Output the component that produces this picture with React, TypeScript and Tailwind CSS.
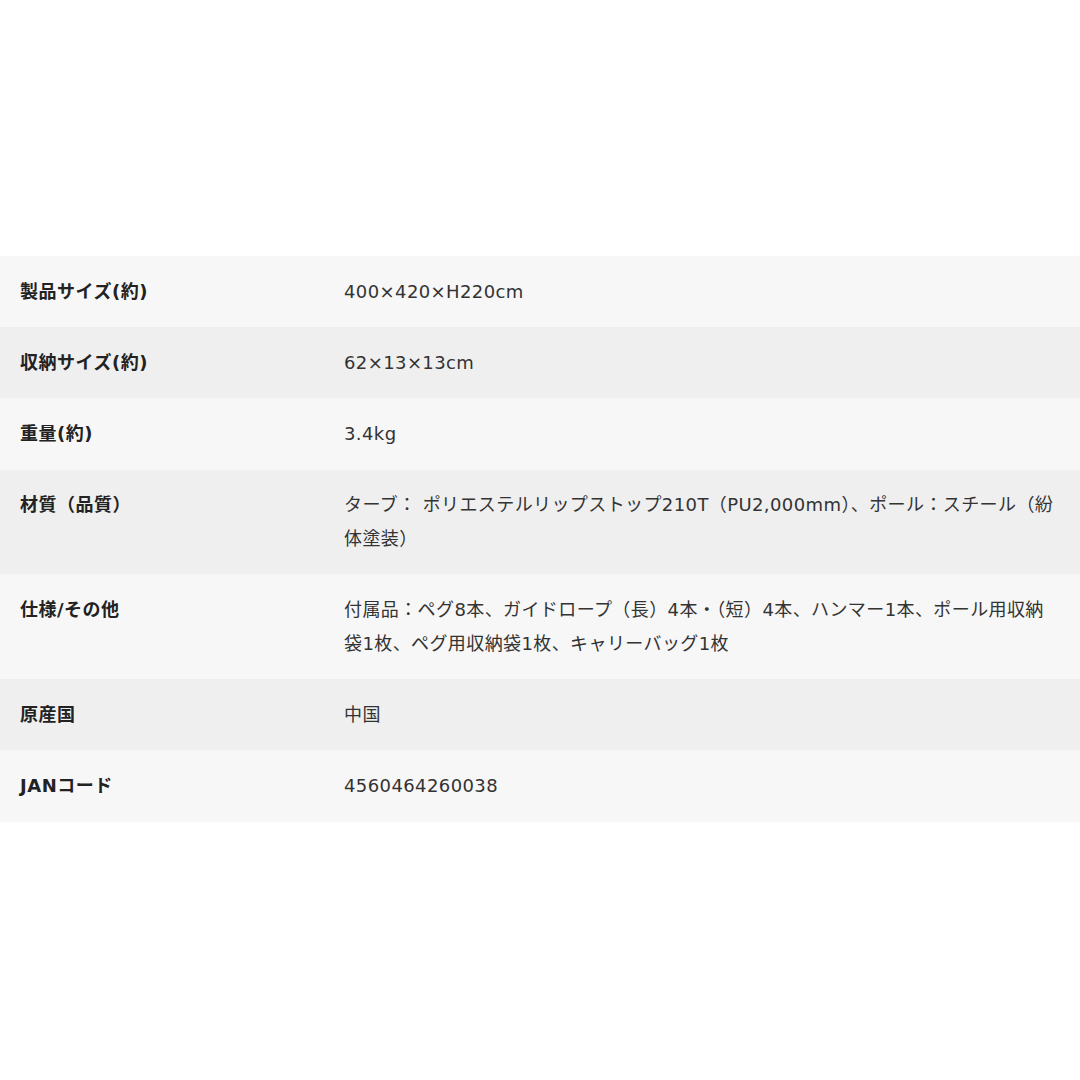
export default function App() {
  const rows: [string, string][] = [
    ["製品サイズ(約)", "400×420×H220cm"],
    ["収納サイズ(約)", "62×13×13cm"],
    ["重量(約)", "3.4kg"],
    ["材質（品質）", "ターブ： ポリエステルリップストップ210T（PU2,000mm）、ポール：スチール（紛体塗装）"],
    ["仕様/その他", "付属品：ペグ8本、ガイドロープ（長）4本・（短）4本、ハンマー1本、ポール用収納袋1枚、ペグ用収納袋1枚、キャリーバッグ1枚"],
    ["原産国", "中国"],
    ["JANコード", "4560464260038"],
  ];
  return (
    <div className="w-[1080px] h-[1080px] bg-white pt-[256px]" style={{ fontFamily: '"DejaVu Sans", "Noto Sans CJK JP", sans-serif' }}>
      <table className="w-full border-collapse">
        <tbody>
          {rows.map(([k, v], i) => (
            <tr key={k} className={i % 2 === 0 ? "bg-[#f7f7f7]" : "bg-[#efefef]"}>
              <th className="w-[30%] text-left align-top pl-[20px] pr-[20px] py-[18.8px] text-[18px] leading-[33.6px] tracking-[0.5px] font-bold text-[#222]">{k}</th>
              <td className="align-top pl-[20px] pr-[20px] py-[18.8px] text-[18px] leading-[33.6px] tracking-[0.4px] text-[#333]">{v}</td>
            </tr>
          ))}
        </tbody>
      </table>
    </div>
  );
}
